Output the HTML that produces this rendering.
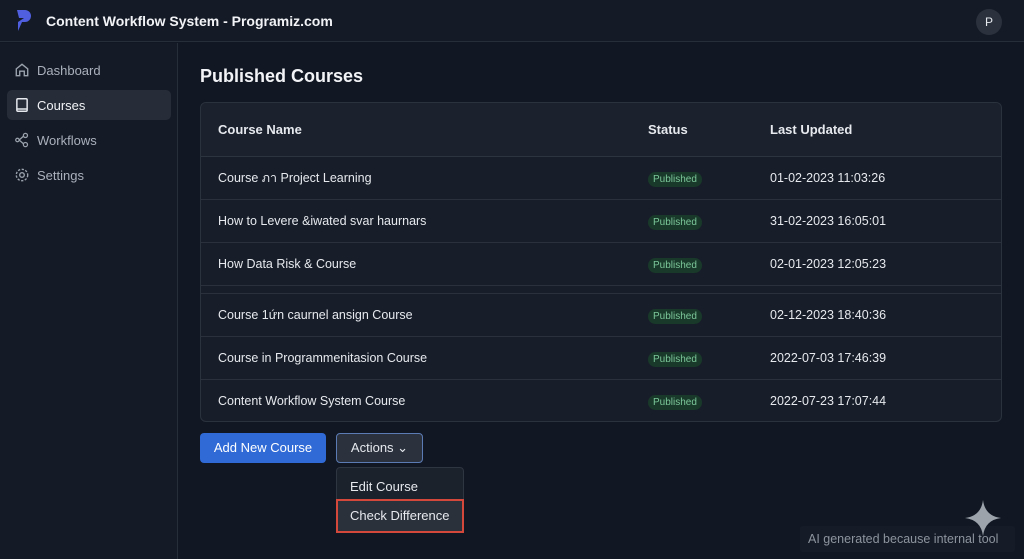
<!DOCTYPE html>
<html><head><meta charset="utf-8"><style>
*{box-sizing:border-box;margin:0;padding:0}
body{width:1024px;height:559px;overflow:hidden;background:#121823;font-family:"Liberation Sans",sans-serif;color:#e6e9ee;position:relative}
.hdr{position:absolute;left:0;top:0;width:1024px;height:42px;background:#151b26;border-bottom:1px solid #262e3a}
.hdr .t{position:absolute;left:46px;top:13px;font-size:14px;font-weight:bold;color:#f1f3f6}
.av{position:absolute;left:976px;top:9px;width:26px;height:26px;border-radius:50%;background:#2b323d;font-size:12px;text-align:center;line-height:26px}
.side{position:absolute;left:0;top:43px;width:178px;height:516px;background:#151b26;border-right:1px solid #262e3a}
.nav{position:absolute;left:7px;width:164px;height:30px;border-radius:5px;font-size:13px;color:#aab1bc}
.nav span{position:absolute;left:30px;top:8px}
.nav svg{position:absolute;left:7px;top:7px}
.nav.a{background:#262d39;color:#f0f2f5}
h1{position:absolute;left:200px;top:66px;font-size:18px;font-weight:bold;color:#f1f3f6}
.card{position:absolute;left:200px;top:102px;width:802px;height:320px;background:#181e29;border:1px solid #2a323e;border-radius:6px;overflow:hidden}
.th{position:absolute;top:0;left:0;width:100%;height:54px;background:#1c222d;border-bottom:1px solid #2c3440;font-size:13px;font-weight:bold}
.th div,.r div{position:absolute;line-height:16px;height:16px}
.r{position:absolute;left:0;width:100%;height:43px;border-bottom:1px solid #2a313d;font-size:12.5px}
.c1{left:17px;top:13px}.c2{left:447px;top:13px}.c3{left:569px;top:13px}
.b{background:#193a2a;color:#7cc79a;font-size:10px;padding:2px 5px;border-radius:8px}
.btn{position:absolute;top:433px;height:30px;border-radius:4px;font-size:13px;line-height:30px;text-align:center}
.dd{position:absolute;left:336px;top:467px;width:128px;height:66px;background:#1c222c;border:1px solid #2e3642;border-radius:4px}
</style></head><body>
<div class="hdr">
<svg style="position:absolute;left:15px;top:9px" width="18" height="24" viewBox="0 0 18 24"><path d="M2 1h8a6 6 0 0 1 0 12H7l-4 9V13l6-4H4z" fill="#4f5fe0"/></svg>
<div class="t">Content Workflow System - Programiz.com</div>
<div class="av">P</div></div>
<div class="side">
<div class="nav" style="top:12px"><svg width="16" height="16" viewBox="0 0 14 14" fill="none" stroke="#9aa2ad" stroke-width="1.2"><path d="M2 6l5-4 5 4v6H9V8H5v4H2z"/></svg><span>Dashboard</span></div>
<div class="nav a" style="top:47px"><svg width="16" height="16" viewBox="0 0 14 14" fill="none" stroke="#e6e9ee" stroke-width="1.3"><rect x="2.5" y="1.5" width="9" height="11" rx="1"/><path d="M2.5 10.5h9"/></svg><span>Courses</span></div>
<div class="nav" style="top:82px"><svg width="16" height="16" viewBox="0 0 14 14" fill="none" stroke="#9aa2ad" stroke-width="1.1"><circle cx="3" cy="7" r="1.5"/><circle cx="10" cy="3" r="1.8"/><circle cx="10" cy="11" r="1.8"/><path d="M4.5 7l4-3.5M4.5 7l4 3.5"/></svg><span>Workflows</span></div>
<div class="nav" style="top:117px"><svg width="16" height="16" viewBox="0 0 14 14" fill="none" stroke="#9aa2ad" stroke-width="1.2"><circle cx="7" cy="7" r="2"/><circle cx="7" cy="7" r="5" stroke-dasharray="2 1.3"/></svg><span>Settings</span></div>
</div>
<h1>Published Courses</h1>
<div class="card">
<div class="th"><div class="c1" style="top:19px">Course Name</div><div class="c2" style="top:19px">Status</div><div class="c3" style="top:19px">Last Updated</div></div>
<div class="r" style="top:54px"><div class="c1">Course ภา Project Learning</div><div class="c2"><span class="b">Published</span></div><div class="c3">01-02-2023 11:03:26</div></div>
<div class="r" style="top:97px"><div class="c1">How to Levere &amp;iwated svar haurnars</div><div class="c2"><span class="b">Published</span></div><div class="c3">31-02-2023 16:05:01</div></div>
<div class="r" style="top:140px"><div class="c1">How Data Risk &amp; Course</div><div class="c2"><span class="b">Published</span></div><div class="c3">02-01-2023 12:05:23</div></div>
<div class="r" style="top:183px;height:8px"></div>
<div class="r" style="top:191px"><div class="c1">Course 1ứn caurnel ansign Course</div><div class="c2"><span class="b">Published</span></div><div class="c3">02-12-2023 18:40:36</div></div>
<div class="r" style="top:234px"><div class="c1">Course in Programmenitasion Course</div><div class="c2"><span class="b">Published</span></div><div class="c3">2022-07-03 17:46:39</div></div>
<div class="r" style="top:277px;border:none"><div class="c1">Content Workflow System Course</div><div class="c2"><span class="b">Published</span></div><div class="c3">2022-07-23 17:07:44</div></div>
</div>
<div class="btn" style="left:200px;width:126px;background:#2f6ad6;color:#fff">Add New Course</div>
<div class="btn" style="left:336px;width:87px;background:#2b323d;border:1px solid #5b7bb5;line-height:28px">Actions &#8964;</div>
<div class="dd">
<div style="position:absolute;left:13px;top:11px;font-size:13px">Edit Course</div>
<div style="position:absolute;left:-1px;top:31px;width:128px;height:34px;background:#2b313b;border:2px solid #d4483c;font-size:13px;padding:7px 0 0 12px">Check Difference</div>
</div>
<div style="position:absolute;left:800px;top:526px;width:215px;height:26px;background:#161c27;border-radius:3px;font-size:12.5px;color:#8d949e;padding:6px 0 0 8px">AI generated because internal tool</div>
<svg style="position:absolute;left:965px;top:500px" width="36" height="36" viewBox="0 0 36 36"><path d="M18 0Q20 16 36 18Q20 20 18 36Q16 20 0 18Q16 16 18 0z" fill="#9da3ab"/></svg>
</body></html>
